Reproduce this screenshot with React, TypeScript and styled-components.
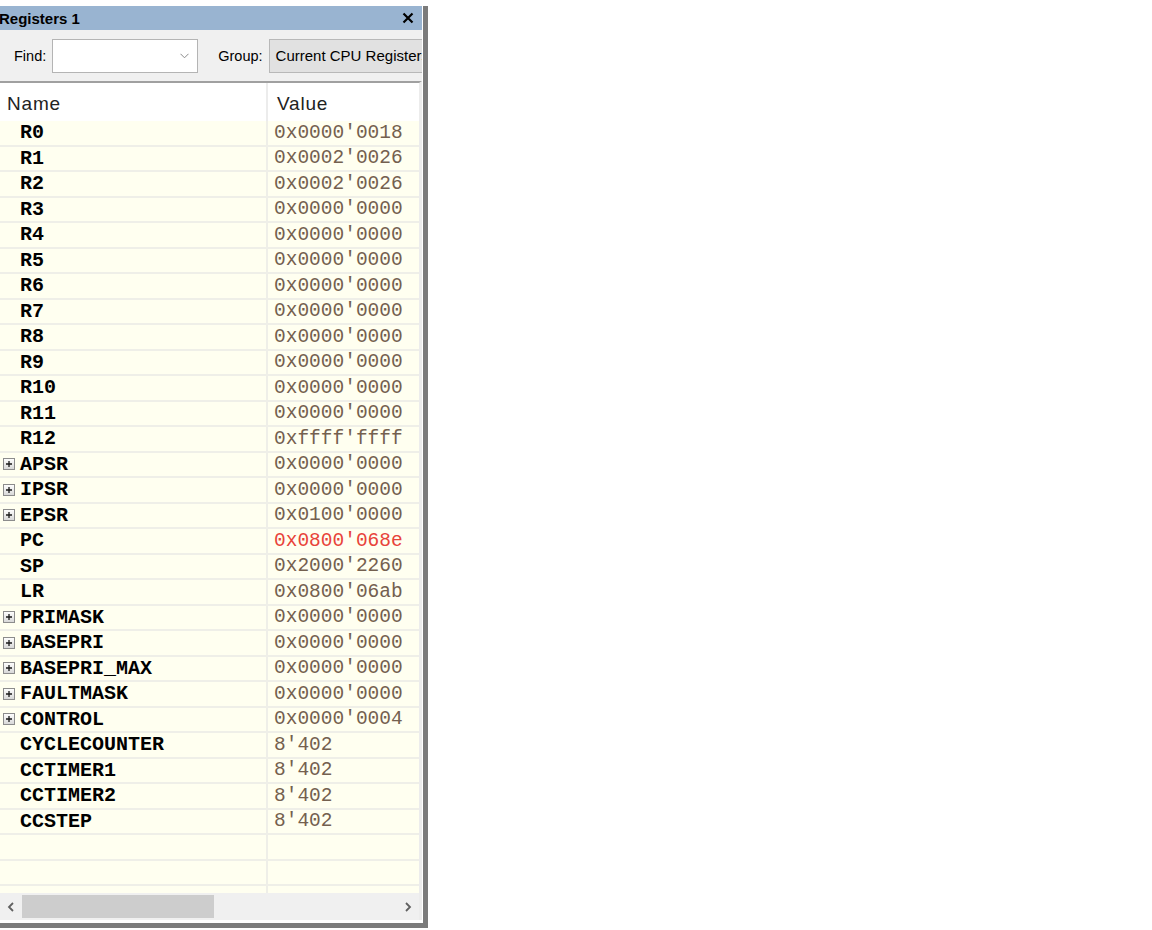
import styled, { createGlobalStyle } from 'styled-components';

const GlobalStyle = createGlobalStyle`
    html, body {
        margin: 0;
        padding: 0;
        background: #ffffff;
    }
    body {
        font-family: "Liberation Sans", Arial, sans-serif;
    }
`;

const Page = styled.div`
    padding-top: 6px;
    height: 930px;
    box-sizing: border-box;
`;

const Frame = styled.div`
    width: 428px;
    height: 922px;
    box-sizing: border-box;
    border-right: 5px solid #7b7b7b;
    border-bottom: 5px solid #7b7b7b;
    background: #ffffff;
    display: flex;
    flex-direction: column;
    padding-right: 1px;
    padding-bottom: 3px;
`;

const TitleBar = styled.div`
    height: 24px;
    flex: none;
    background: #99b4d1;
    display: flex;
    align-items: center;
    justify-content: space-between;
    padding-right: 8px;
    font-weight: bold;
    font-size: 15px;
    color: #000;

    .title{
        margin-left: -1px;
    }
`;

const Toolbar = styled.div`
    height: 51px;
    flex: none;
    background: #f0f0f0;
    display: flex;
    align-items: center;
    font-size: 14.5px;
    color: #000;
    overflow: hidden;
    white-space: nowrap;
`;

const Label = styled.span<{ $left: number }>`
    margin-left: ${props => props.$left}px;
    margin-right: 6px;
`;

const FindBox = styled.div`
    width: 146px;
    height: 34px;
    box-sizing: border-box;
    border: 1px solid #b4b4b4;
    background: #fff;
    display: flex;
    align-items: center;
    justify-content: flex-end;
    padding-right: 8px;
    flex: none;
`;

const GroupButton = styled.div`
    height: 34px;
    box-sizing: border-box;
    border: 1px solid #b8b8b8;
    border-right: none;
    background: #e1e1e1;
    display: flex;
    align-items: center;
    padding-left: 6px;
    font-size: 15px;
    flex: 1;
    min-width: 0;
    overflow: hidden;
`;

const List = styled.div`
    flex: 1;
    display: flex;
    flex-direction: column;
    border-top: 2px solid #a0a0a0;
    border-right: 3px solid #ececec;
    overflow: hidden;
`;

const Header = styled.div`
    height: 38px;
    flex: none;
    display: grid;
    grid-template-columns: 268px 1fr;
    background: #fff;
    font-size: 19px;
    letter-spacing: 0.8px;
    color: #222;

    div{
        display: flex;
        align-items: center;
        padding-top: 4px;
    }
    div:first-child{
        padding-left: 7px;
        border-right: 2px solid #ececec;
    }
    div:last-child{
        padding-left: 9px;
    }
`;

const Row = styled.div`
    height: 25.5px;
    box-sizing: border-box;
    flex: none;
    display: grid;
    grid-template-columns: 268px 1fr;
    background: #fffff0;
    border-bottom: 2px solid #efefe8;
`;

const NameCell = styled.div`
    position: relative;
    display: flex;
    align-items: center;
    padding-left: 20px;
    border-right: 2px solid #efefe8;
    font-family: "Liberation Mono", "Courier New", monospace;
    font-weight: bold;
    font-size: 20px;
    color: #000;
    white-space: pre;
`;

const ValueCell = styled.div<{ $changed?: boolean }>`
    display: flex;
    align-items: center;
    padding-left: 6px;
    font-family: "Liberation Mono", "Courier New", monospace;
    font-size: 19.5px;
    color: ${props => props.$changed ? '#e8433a' : '#74604f'};
    white-space: pre;
`;

const Expander = styled.svg`
    position: absolute;
    left: 3px;
    top: 50%;
    margin-top: -6px;
`;

const Filler = styled.div`
    flex: 1;
    display: flex;
    flex-direction: column;
    background: #fffff0;
    overflow: hidden;
`;

const EmptyCell = styled.div`
    border-right: 2px solid #efefe8;
`;

const ScrollBar = styled.div`
    height: 27px;
    flex: none;
    background: #f0f0f0;
    display: flex;
    align-items: center;
`;

const Arrow = styled.div`
    width: 22px;
    height: 27px;
    display: flex;
    align-items: center;
    justify-content: center;
    flex: none;
`;

const Track = styled.div`
    flex: 1;
    height: 100%;
    display: flex;
    align-items: center;
`;

const Thumb = styled.div`
    width: 192px;
    height: 23px;
    background: #cdcdcd;
`;

interface Register {
    name: string;
    value: string;
    group?: boolean;
    changed?: boolean;
}

const registers: Register[] = [
    { name: 'R0', value: "0x0000'0018" },
    { name: 'R1', value: "0x0002'0026" },
    { name: 'R2', value: "0x0002'0026" },
    { name: 'R3', value: "0x0000'0000" },
    { name: 'R4', value: "0x0000'0000" },
    { name: 'R5', value: "0x0000'0000" },
    { name: 'R6', value: "0x0000'0000" },
    { name: 'R7', value: "0x0000'0000" },
    { name: 'R8', value: "0x0000'0000" },
    { name: 'R9', value: "0x0000'0000" },
    { name: 'R10', value: "0x0000'0000" },
    { name: 'R11', value: "0x0000'0000" },
    { name: 'R12', value: "0xffff'ffff" },
    { name: 'APSR', value: "0x0000'0000", group: true },
    { name: 'IPSR', value: "0x0000'0000", group: true },
    { name: 'EPSR', value: "0x0100'0000", group: true },
    { name: 'PC', value: "0x0800'068e", changed: true },
    { name: 'SP', value: "0x2000'2260" },
    { name: 'LR', value: "0x0800'06ab" },
    { name: 'PRIMASK', value: "0x0000'0000", group: true },
    { name: 'BASEPRI', value: "0x0000'0000", group: true },
    { name: 'BASEPRI_MAX', value: "0x0000'0000", group: true },
    { name: 'FAULTMASK', value: "0x0000'0000", group: true },
    { name: 'CONTROL', value: "0x0000'0004", group: true },
    { name: 'CYCLECOUNTER', value: "8'402" },
    { name: 'CCTIMER1', value: "8'402" },
    { name: 'CCTIMER2', value: "8'402" },
    { name: 'CCSTEP', value: "8'402" },
];

function PlusBox() {
    return (
        <Expander width="12" height="12" viewBox="0 0 12 12">
            <defs>
                <linearGradient id="pb" x1="0" y1="0" x2="0" y2="1">
                    <stop offset="0" stopColor="#ffffff" />
                    <stop offset="1" stopColor="#d6d6d6" />
                </linearGradient>
            </defs>
            <rect x="0.5" y="0.5" width="11" height="11" fill="url(#pb)" stroke="#8c8c8c" />
            <path d="M3 6h6M6 3v6" stroke="#1a1a1a" strokeWidth="1.3" />
        </Expander>
    );
}

export default function App() {
    return (
        <Page>
            <GlobalStyle />
            <Frame>
                <TitleBar>
                    <span className="title">Registers 1</span>
                    <svg width="12" height="12" viewBox="0 0 12 12">
                        <path d="M1.5 1.5l9 9M10.5 1.5l-9 9" stroke="#000" strokeWidth="2.2" />
                    </svg>
                </TitleBar>

                <Toolbar>
                    <Label $left={14}>Find:</Label>
                    <FindBox>
                        <svg width="9" height="6" viewBox="0 0 9 6">
                            <path d="M0.5 0.8l4 4 4-4" stroke="#8a8a8a" strokeWidth="1" fill="none" />
                        </svg>
                    </FindBox>
                    <Label $left={20}>Group:</Label>
                    <GroupButton>Current CPU Registers</GroupButton>
                </Toolbar>

                <List>
                    <Header>
                        <div>Name</div>
                        <div>Value</div>
                    </Header>

                    {
                        registers.map( (reg) => (
                            <Row key={reg.name}>
                                <NameCell>
                                    { reg.group && <PlusBox /> }
                                    {reg.name}
                                </NameCell>
                                <ValueCell $changed={reg.changed}>{reg.value}</ValueCell>
                            </Row>
                        ))
                    }

                    <Filler>
                        <Row><EmptyCell /><div /></Row>
                        <Row><EmptyCell /><div /></Row>
                        <Row><EmptyCell /><div /></Row>
                    </Filler>

                    <ScrollBar>
                        <Arrow>
                            <svg width="8" height="10" viewBox="0 0 8 10">
                                <path d="M6 1L2 5l4 4" stroke="#606060" strokeWidth="1.8" fill="none" />
                            </svg>
                        </Arrow>
                        <Track>
                            <Thumb />
                        </Track>
                        <Arrow>
                            <svg width="8" height="10" viewBox="0 0 8 10">
                                <path d="M2 1l4 4-4 4" stroke="#606060" strokeWidth="1.8" fill="none" />
                            </svg>
                        </Arrow>
                    </ScrollBar>
                </List>
            </Frame>
        </Page>
    );
}
